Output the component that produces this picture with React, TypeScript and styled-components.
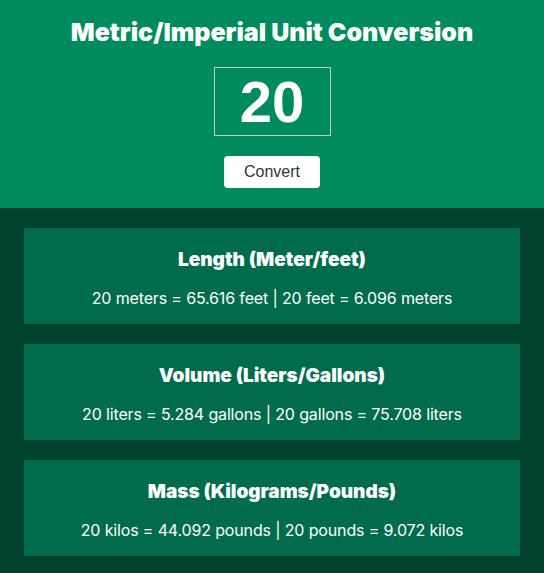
import { useState } from 'react';
import styled, { createGlobalStyle } from 'styled-components';

const GlobalStyle = createGlobalStyle`
    body {
        margin: 0;
        font-family: Inter, 'Liberation Sans', sans-serif;
        background-color: #00442f;
    }
`;

const units = [
    { title: 'Length (Meter/feet)', metric: 'meters', imperial: 'feet', to: 3.2808, back: 0.3048 },
    { title: 'Volume (Liters/Gallons)', metric: 'liters', imperial: 'gallons', to: 0.2642, back: 3.7854 },
    { title: 'Mass (Kilograms/Pounds)', metric: 'kilos', imperial: 'pounds', to: 2.2046, back: 0.4536 },
];

const App = () => {
    const [value, setValue] = useState('20');
    const [amount, setAmount] = useState(20);

    return (
        <>
            <GlobalStyle />
            <Header>
                <Title>Metric/Imperial Unit Conversion</Title>
                <NumberInput value={value} onChange={(e) => setValue(e.target.value)} />
                <ConvertButton onClick={() => setAmount(+value || 0)}>Convert</ConvertButton>
            </Header>
            <Results>
                {units.map((unit) => (
                    <Card key={unit.title}>
                        <CardTitle>{unit.title}</CardTitle>
                        <CardText>
                            {amount} {unit.metric} = {(amount * unit.to).toFixed(3)} {unit.imperial} | {amount}{' '}
                            {unit.imperial} = {(amount * unit.back).toFixed(3)} {unit.metric}
                        </CardText>
                    </Card>
                ))}
            </Results>
        </>
    );
};

const Header = styled.header`
    display: flex;
    flex-direction: column;
    align-items: center;
    background-color: #008b5e;
    padding: 17px 0 20px;
`;

const Title = styled.h1`
    margin: 0 0 20px;
    font-size: 25px;
    line-height: 30px;
    font-weight: 900;
    color: #fff;
`;

const NumberInput = styled.input`
    box-sizing: border-box;
    width: 117px;
    height: 69px;
    background: transparent;
    border: 1px solid #c9c9c9;
    color: #fff;
    text-align: center;
    font-family: 'Liberation Sans', Arial, sans-serif;
    font-size: 58px;
    font-weight: bold;
    outline: none;
    padding: 0;
`;

const ConvertButton = styled.button`
    margin-top: 20px;
    width: 96px;
    height: 32px;
    border: none;
    border-radius: 4px;
    background-color: #fff;
    color: #333;
    font-family: 'Liberation Sans', Arial, sans-serif;
    font-size: 16px;
    cursor: pointer;
`;

const Results = styled.main`
    display: flex;
    flex-direction: column;
    gap: 20px;
    padding: 20px 24px;
`;

const Card = styled.section`
    background-color: #006c4d;
    padding: 20px 20px 15px;
    text-align: center;
    color: #fff;
`;

const CardTitle = styled.h2`
    margin: 0 0 17px;
    font-size: 19px;
    line-height: 23px;
    font-weight: 900;
`;

const CardText = styled.p`
    margin: 0 0 1px;
    font-size: 16px;
    line-height: 20px;
    letter-spacing: -0.15px;
`;

export default App;
